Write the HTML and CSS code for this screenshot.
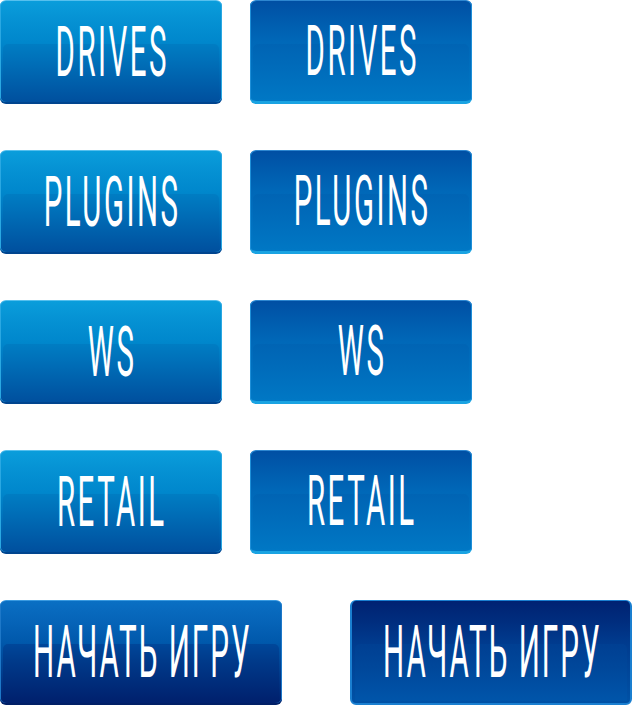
FILE: index.html
```html
<!DOCTYPE html>
<html lang="ru">
<head>
<meta charset="utf-8">
<link rel="stylesheet" href="styles.css">
</head>
<body>
<div class="sheet">
  <div class="row">
    <a class="btn blue"><span class="label">DRIVES</span></a>
    <a class="btn blue hover"><span class="label">DRIVES</span></a>
  </div>
  <div class="row">
    <a class="btn blue"><span class="label">PLUGINS</span></a>
    <a class="btn blue hover"><span class="label">PLUGINS</span></a>
  </div>
  <div class="row">
    <a class="btn blue"><span class="label">WS</span></a>
    <a class="btn blue hover"><span class="label">WS</span></a>
  </div>
  <div class="row">
    <a class="btn blue"><span class="label">RETAIL</span></a>
    <a class="btn blue hover"><span class="label">RETAIL</span></a>
  </div>
  <div class="row wide">
    <a class="btn start"><span class="label">НАЧАТЬ ИГРУ</span></a>
    <a class="btn start hover"><span class="label">НАЧАТЬ ИГРУ</span></a>
  </div>
</div>
</body>
</html>
```
FILE: styles.css
```css
html, body {
  margin: 0;
  padding: 0;
  background: #ffffff;
}

.sheet {
  display: flex;
  flex-direction: column;
  gap: 46px;
  width: 632px;
}

.row {
  display: flex;
  gap: 28px;
}

.row.wide {
  gap: 68px;
}

.btn {
  position: relative;
  box-sizing: border-box;
  width: 222px;
  height: 104px;
  border-radius: 6px;
  display: flex;
  align-items: center;
  justify-content: center;
  overflow: hidden;
  text-decoration: none;
}

.row.wide .btn {
  width: 282px;
  height: 105px;
}

.btn::before {
  content: "";
  position: absolute;
  left: 3px;
  right: 3px;
  top: 43px;
  bottom: 2px;
  border-radius: 5px 5px 0 0;
}

.label {
  position: relative;
  display: inline-block;
  font-family: Roboto, "Liberation Sans", sans-serif;
  font-weight: 400;
  font-size: 70px;
  line-height: 1;
  color: #ffffff;
  transform: scaleX(0.42);
  letter-spacing: 6px;
  padding-left: 6px;
  white-space: nowrap;
}

.row.wide .label {
  font-size: 73px;
  transform: scaleX(0.405);
  letter-spacing: 5px;
  padding-left: 5px;
}

/* normal blue */
.blue {
  background: linear-gradient(#0a9ddb 0%, #0591d3 20%, #0087cc 41%, #0050a0 100%);
  border-top: 1px solid #56c0ee;
  border-bottom: 2px solid #00458f;
  box-shadow: inset 1px 0 0 #2aa8e2, inset -1px 0 0 #2aa8e2;
}
.blue::before {
  background: linear-gradient(#007dc3 0%, #0070b9 30%, #00519f 100%);
}

/* hover blue */
.blue.hover {
  background: linear-gradient(#004fa4 0%, #005cae 20%, #0068b8 41%, #0078c5 100%);
  border-top: 1px solid #2d86d0;
  border-bottom: 3px solid #1aa3e2;
  box-shadow: inset 1px 0 0 #1f8fd8, inset -1px 0 0 #1f8fd8;
}
.blue.hover::before {
  background: linear-gradient(#0064b4 0%, #006bba 40%, #0077c4 100%);
}

/* start */
.start {
  background: linear-gradient(#0a6fc3 0%, #0664b8 20%, #0058ab 41%, #00206e 100%);
  border-top: 1px solid #3a9ae0;
  border-bottom: 2px solid #001f66;
  box-shadow: inset 1px 0 0 #1e78c8, inset -1px 0 0 #1e78c8;
}
.start::before {
  background: linear-gradient(#00479a 0%, #003a8a 30%, #00216e 100%);
}

.start.hover {
  background: linear-gradient(#002272 0%, #002d7e 20%, #003b8e 41%, #0052a6 100%);
  border: 2px solid #1a7fd0;
  border-top-width: 1px;
  box-shadow: none;
}
.start.hover::before {
  background: linear-gradient(#003f92 0%, #00479a 40%, #0055aa 100%);
}
```
